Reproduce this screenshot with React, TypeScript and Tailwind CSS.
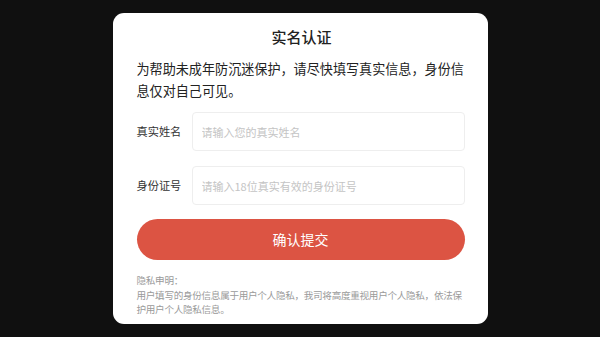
export default function App() {
  return (
    <main
      className="flex h-[337px] w-[600px] items-start justify-center bg-[#101010] pt-[13px]"
      style={{ fontFamily: '"Noto Sans CJK SC", "Noto Sans", sans-serif' }}
    >
      <div className="flex h-[311px] w-[375px] flex-col rounded-[11px] bg-white pr-[21px] pl-[24px]">
        <h1 className="mt-[13px] text-center text-[15px] leading-[22px] font-medium text-[#222]">
          实名认证
        </h1>
        <p className="mt-[10px] text-[13.1px] leading-[22px] text-[#222]">
          为帮助未成年防沉迷保护，请尽快填写真实信息，身份信息仅对自己可见。
        </p>

        <div className="mt-[10px] flex items-center gap-[10px]">
          <label className="w-[45px] shrink-0 text-[11.2px] text-[#333]">真实姓名</label>
          <input
            className="mr-[2px] h-[39px] flex-1 rounded-[4px] border border-[#eeeeee] px-[9px] text-[11px] outline-none placeholder:text-[#c4c4c4]"
            placeholder="请输入您的真实姓名"
          />
        </div>
        <div className="mt-[15px] flex items-center gap-[10px]">
          <label className="w-[45px] shrink-0 text-[11.2px] text-[#333]">身份证号</label>
          <input
            className="mr-[2px] h-[39px] flex-1 rounded-[4px] border border-[#eeeeee] px-[9px] text-[11px] outline-none placeholder:text-[#c4c4c4]"
            placeholder="请输入18位真实有效的身份证号"
          />
        </div>

        <button
          type="button"
          className="mt-[14px] mr-[2px] h-[41px] rounded-full bg-[#dc5443] text-[14px] text-white"
        >
          确认提交
        </button>

        <div className="mt-[13px] pr-[2px] text-[9.6px] leading-[14.5px] tracking-[-0.3px] text-[#9a9a9a]">
          <p>隐私申明：</p>
          <p>
            用户填写的身份信息属于用户个人隐私，我司将高度重视用户个人隐私，依法保护用户个人隐私信息。
          </p>
        </div>
      </div>
    </main>
  );
}
